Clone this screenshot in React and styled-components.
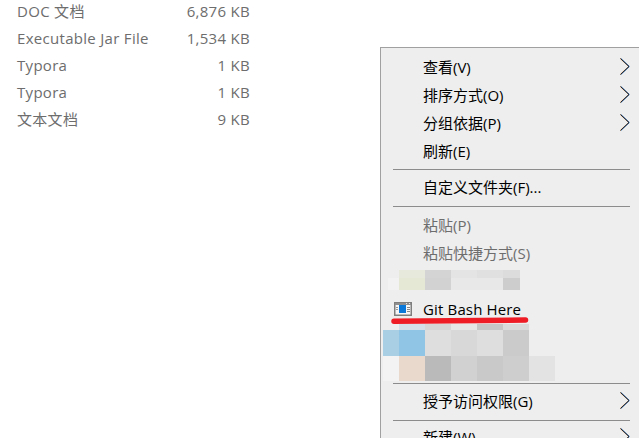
import React from 'react'
import styled, { createGlobalStyle } from 'styled-components'

const Global = createGlobalStyle`
	html, body {
		margin: 0;
		padding: 0;
		background: #fff;
	}
	body {
		width: 639px;
		height: 438px;
		overflow: hidden;
	}
`

const Page = styled.div`
	position: relative;
	width: 639px;
	height: 438px;
	overflow: hidden;
	font-family: 'Open Sans', 'Noto Sans CJK SC', sans-serif;
	display: flex;
	justify-content: space-between;
`

const FileList = styled.div`
	width: 233px;
	margin: -2px 0 0 17px;
`

const FileRow = styled.div`
	display: flex;
	justify-content: space-between;
	height: 27px;
	line-height: 27px;
	font-size: 15px;
	letter-spacing: 0.3px;
	color: #6d6d6d;
	white-space: nowrap;
`

const Menu = styled.div`
	position: relative;
	width: 259px;
	height: 420px;
	margin-top: 47px;
	box-sizing: border-box;
	padding-top: 6px;
	background: #eeeeee;
	border: 1px solid #a0a0a0;
	border-right: 0;
	border-bottom: 0;
`

const Item = styled.div`
	display: flex;
	align-items: center;
	justify-content: space-between;
	height: 28px;
	padding: 0 9px 0 42px;
	font-size: 15px;
	color: ${(p) => (p.$disabled ? '#6d6d6d' : '#000')};
	white-space: nowrap;
`

const Label = styled.span`
	display: flex;
	align-items: center;
	padding-bottom: ${(p) => (p.$latin ? '2px' : '3px')};
	letter-spacing: ${(p) => (p.$latin ? '0.15px' : '0')};
`

const ItemIcon = styled.svg`
	position: absolute;
	left: 13px;
	width: 18px;
	height: 14px;
`

const Chevron = styled.svg`
	width: 10px;
	height: 17px;
	flex: none;
	margin-bottom: 3px;
`

const Separator = styled.div`
	height: 1px;
	margin: ${(p) => p.$above}px 9px ${(p) => p.$below}px 12px;
	background: #8c8c8c;
`

const Mosaic = styled.div`
	display: grid;
	grid-template-columns: ${(p) => p.$cols};
	grid-template-rows: ${(p) => p.$rows};
	padding: ${(p) => p.$pad};
`

const Cell = styled.div`
	background: ${(p) => p.$c || 'transparent'};
`

const RedMark = styled.svg`
	position: absolute;
	left: 10px;
	top: 269px;
	width: 138px;
	height: 7px;
`

const files = [
	['DOC 文档', '6,876 KB'],
	['Executable Jar File', '1,534 KB'],
	['Typora', '1 KB'],
	['Typora', '1 KB'],
	['文本文档', '9 KB'],
]

const mosaicTop = [
	[null, '#e6e9dc', '#d4d4d4', '#e4e4e4', '#e0e0e0', '#dcdcdc'],
	['#f2f2f2', '#e5e8d4', '#d2d2d2', '#e8e8e8', '#e8e8e8', '#cdcdcd'],
]

const mosaicBottom = [
	[null, '#d5dfe8', '#d6d6d6', '#e6e6e6', '#c6c6c6', '#dadada', null],
	['#a9cfe4', '#90c5e5', '#dedede', '#d8d8d8', '#dedede', '#cbcbcb', null],
	['#f3f3f3', '#e9d9cd', '#bababa', '#d1d1d1', '#c9c9c9', '#cecece', '#e3e3e3'],
]

const Arrow = () => (
	<Chevron viewBox="0 0 10 17">
		<polyline points="0.1,0.5 8.6,8.5 0.1,16.5" fill="none" stroke="#e8a060" strokeWidth="1" />
		<polyline points="0.9,0.5 9.4,8.5 0.9,16.5" fill="none" stroke="#3a7fd0" strokeWidth="1" />
		<polyline points="0.5,0.5 9,8.5 0.5,16.5" fill="none" stroke="#111" strokeWidth="0.9" />
	</Chevron>
)

const MenuItem = ({ label, sub, disabled, latin, children }) => (
	<Item $disabled={disabled}>
		<Label $latin={latin}>
			{children}
			{label}
		</Label>
		{sub && <Arrow />}
	</Item>
)

const MosaicBlock = ({ rows, cols, pad, data }) => (
	<Mosaic $rows={rows} $cols={cols} $pad={pad}>
		{data.map((row, i) => row.map((c, j) => <Cell key={`${i}-${j}`} $c={c} />))}
	</Mosaic>
)

const GitIcon = () => (
	<ItemIcon viewBox="0 0 18 14">
		<rect x="0.75" y="0.75" width="16.5" height="12.5" fill="#f6f6f6" stroke="#7e7e7e" strokeWidth="1.5" />
		<rect x="1" y="1" width="16" height="2" fill="#8e8e8e" />
		<rect x="12" y="1" width="1" height="1" fill="#e6e6e6" />
		<rect x="15" y="1" width="1" height="1" fill="#e6e6e6" />
		<rect x="5" y="3" width="7" height="8" fill="#0a78d8" />
		<rect x="2" y="5" width="2" height="1" fill="#999" />
		<rect x="2" y="7" width="2" height="1" fill="#999" />
		<rect x="13" y="5" width="3" height="1" fill="#888" />
		<rect x="13" y="7" width="3" height="1" fill="#888" />
		<rect x="13" y="9" width="3" height="1" fill="#888" />
	</ItemIcon>
)

const App = () => (
	<Page>
		<Global />
		<FileList>
			{files.map(([name, size], i) => (
				<FileRow key={i}>
					<span>{name}</span>
					<span>{size}</span>
				</FileRow>
			))}
		</FileList>
		<Menu>
			<MenuItem label="查看(V)" sub />
			<MenuItem label="排序方式(O)" sub />
			<MenuItem label="分组依据(P)" sub />
			<MenuItem label="刷新(E)" />
			<Separator $above={3} $below={4} />
			<MenuItem label="自定义文件夹(F)..." />
			<Separator $above={4} $below={5} />
			<MenuItem label="粘贴(P)" disabled />
			<MenuItem label="粘贴快捷方式(S)" disabled />
			<MosaicBlock rows="8px 12px" cols="11px repeat(4, 26px) 17px" pad="2px 0 6px 7px" data={mosaicTop} />
			<MenuItem label="Git Bash Here" latin>
				<GitIcon />
			</MenuItem>
			<MosaicBlock rows="6px 26px 25px" cols="16px repeat(6, 26px)" pad="0 0 0 2px" data={mosaicBottom} />
			<Separator $above={2} $below={4} />
			<MenuItem label="授予访问权限(G)" sub />
			<Separator $above={4} $below={3} />
			<MenuItem label="新建(W)" sub />
			<RedMark viewBox="0 0 138 7">
				<path d="M3 4.2 L134.5 3" stroke="#ee1c25" strokeWidth="5.5" strokeLinecap="round" fill="none" />
			</RedMark>
		</Menu>
	</Page>
)

export default App
